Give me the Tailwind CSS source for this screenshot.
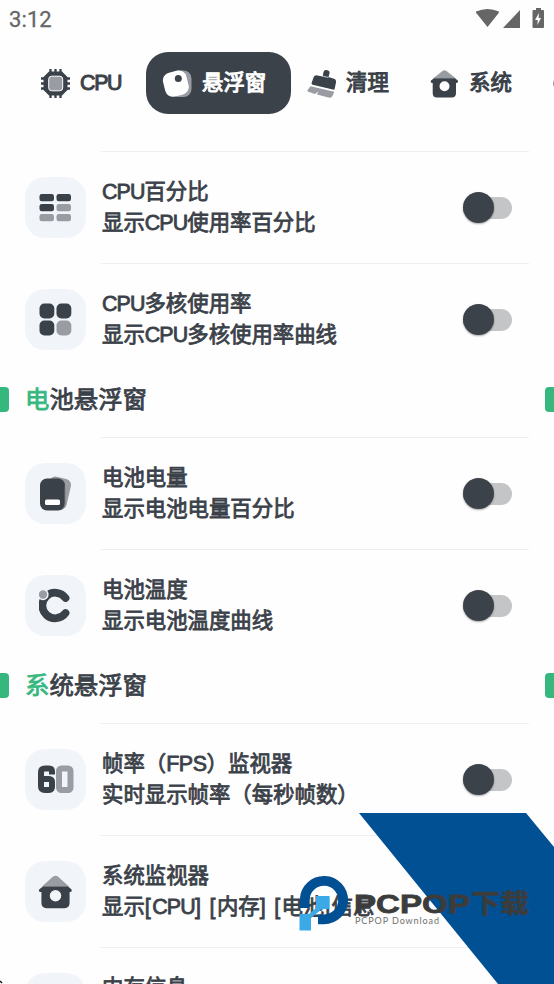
<!DOCTYPE html>
<html lang="zh-CN">
<head>
<meta charset="utf-8">
<title>悬浮窗</title>
<script src="https://cdn.jsdelivr.net/npm/@tailwindcss/browser@4"></script>
</head>
<body class="bg-[#fefefe]">
<main class="relative flex h-[984px] w-[554px] flex-col overflow-hidden bg-[#fefefe] font-['Liberation_Sans','Noto_Sans_CJK_SC',sans-serif] text-[21.4px] text-[#3b4149]">
  <!-- status bar -->
  <header class="flex h-[38px] shrink-0 items-center justify-between pl-[9px] pr-[9px] font-[Roboto,sans-serif] text-[22px] leading-[38px] text-[#666]">
    <span class="pt-[2px] tracking-[0.1px] [-webkit-text-stroke:0.3px_#666]">3:12</span>
    <svg class="h-[38px] w-[72px]" viewBox="0 0 72 38" fill="#666">
      <path d="M3 11.500Q14.500 6.500 26 11.500Q26 13 24.500 14.500L14.500 27L4.500 14.500Q2.500 13 3 11.500Z"/>
      <path d="M47 10V28H30Z"/>
      <path fill-rule="evenodd" d="M63 8H68V10H70Q71 10 71 11V27Q71 28 70 28H60.500Q59.500 28 59.500 27V11Q59.500 10 60.500 10H63ZM66 13L62 20H64.800L64.300 25L68 18H65.600Z"/>
    </svg>
  </header>

  <!-- tabs -->
  <nav class="flex h-[113px] shrink-0 items-start pt-[14px] [-webkit-text-stroke:1px_currentColor]">
    <div class="flex h-[62px] w-[146px] shrink-0 items-center pl-[40px]">
      <svg class="h-[31px] w-[31px]" viewBox="0 0 31 31">
        <path d="M10.500 1V30M15.500 1V30M20.500 1V30M1 10.500H30M1 15.500H30M1 20.500H30" stroke="#3b4149" stroke-width="2.300"/>
        <path d="M9 3.500H22L27.500 9V22L22 27.500H9L3.500 22V9Z" fill="#3b4149"/>
        <rect x="8.700" y="8.200" width="14" height="14.600" rx="3" fill="#999ca2" stroke="#fff" stroke-width="1"/>
      </svg>
      <span class="ml-[9px] tracking-[-1.300px]">CPU</span>
    </div>
    <div class="flex h-[62px] w-[145px] shrink-0 items-center rounded-[22px] bg-[#3b424a] pl-[16px] text-white">
      <svg class="h-[31px] w-[31px]" viewBox="0 0 31 31">
        <rect x="8" y="2.500" width="21.500" height="26.500" rx="8" fill="#999ca2"/>
        <rect x="1.800" y="3.300" width="24" height="24.700" rx="8" fill="#fff" transform="rotate(-14 13.800 15.600)"/>
        <circle cx="16.300" cy="10.400" r="3.500" fill="#3b424a"/>
      </svg>
      <span class="ml-[9px]">悬浮窗</span>
    </div>
    <div class="flex h-[62px] w-[123px] shrink-0 items-center pl-[15px]">
      <svg class="h-[31px] w-[31px]" viewBox="0 0 31 31">
        <path d="M17.500 4Q18.200 1.600 20.500 2.100L22 2.500Q24.100 3.200 23.600 5L22.500 9L28 10.700Q30.500 11.700 30 14.500L28.700 20.500Q28.400 22 26.800 21.600L6.600 16.800Q5.200 16.300 5.600 15L7.500 9.500Q8.600 6.700 11.400 7.400L16.600 8.400Z" fill="#3b4149"/>
        <path d="M16.200 8L22.400 9.500" stroke="#fff" stroke-width=".7"/>
        <path d="M4.500 18.200L28.300 23.700L26.600 27.700Q25.500 30.300 22.500 29.600L11 26.500L12.500 23.500L9 26L2.200 23.800Q.5 22.900 2 21.500Z" fill="#999ca2"/>
      </svg>
      <span class="ml-[9px]">清理</span>
    </div>
    <div class="flex h-[62px] w-[139px] shrink-0 items-center pl-[15px]">
      <svg class="h-[31px] w-[31px]" viewBox="0 0 31 31">
        <path d="M4 10.500L13.500 3Q15.500 1.500 17.500 3L27 10.500Z" fill="#999ca2"/>
        <path fill-rule="evenodd" d="M5 10.300H26L28.800 12.600Q29.800 14.500 27.800 15H27V25Q27 29.500 22.500 29.500H8Q3.700 29.500 3.700 25V15H2.800Q.9 14.500 2 12.600ZM15.500 13.300A5 5 0 1 0 15.500 23.300A5 5 0 1 0 15.500 13.300Z" fill="#3b4149"/>
      </svg>
      <span class="ml-[9px]">系统</span>
    </div>
    <i class="mt-[25px] h-[13px] w-[13px] shrink-0 rounded-full bg-[#999ca2]"></i>
  </nav>

  <!-- settings list -->
  <section class="shrink-0 leading-[31px] [-webkit-text-stroke:0.8px_currentColor]">
    <article class="flex h-[112px] items-center pl-[25px]">
      <div class="flex h-[61px] w-[61px] shrink-0 items-center justify-center rounded-[20px] bg-[#f1f5fa]">
        <svg class="h-[33px] w-[33px]" viewBox="0 0 33 33" fill="#3b4149">
          <rect x=".5" y="3" width="14.500" height="7.300" rx="2.300"/><rect x="17.500" y="3" width="14.500" height="7.300" rx="2.300"/><rect x=".5" y="13" width="14.500" height="7.300" rx="2.300"/>
          <g fill="#999ca2"><rect x="17.500" y="13" width="14.500" height="7.300" rx="2.300"/><rect x=".5" y="23" width="14.500" height="7.300" rx="2.300"/><rect x="17.500" y="23" width="14.500" height="7.300" rx="2.300"/></g>
        </svg>
      </div>
      <div class="ml-[15px] flex h-full w-[428px] items-center justify-between border-t border-[#efefef] pr-[17px]">
        <div class="pl-px whitespace-nowrap"><p><span class="tracking-[-0.900px]">CPU</span>百分比</p><p>显示<span class="tracking-[-0.900px]">CPU</span>使用率百分比</p></div>
        <div class="flex h-[22px] w-[49px] items-center rounded-full bg-[#c4c5c7]"><i class="h-[31px] w-[31px] shrink-0 rounded-full bg-[#3b424a] shadow-[0_1px_2px_rgba(0,0,0,0.35)]"></i></div>
      </div>
    </article>
    <article class="flex h-[112px] items-center pl-[25px]">
      <div class="flex h-[61px] w-[61px] shrink-0 items-center justify-center rounded-[20px] bg-[#f1f5fa]">
        <svg class="h-[33px] w-[33px]" viewBox="0 0 33 33" fill="#3b4149">
          <rect x=".5" y=".5" width="14.800" height="15" rx="4.800"/><rect x="17.500" y=".5" width="14.800" height="15" rx="4.800"/><rect x=".5" y="17.500" width="14.800" height="15" rx="4.800"/><rect x="17.500" y="17.500" width="14.800" height="15" rx="4.800" fill="#999ca2"/>
        </svg>
      </div>
      <div class="ml-[15px] flex h-full w-[428px] items-center justify-between border-t border-[#efefef] pr-[17px]">
        <div class="pl-px whitespace-nowrap"><p><span class="tracking-[-0.900px]">CPU</span>多核使用率</p><p>显示<span class="tracking-[-0.900px]">CPU</span>多核使用率曲线</p></div>
        <div class="flex h-[22px] w-[49px] items-center rounded-full bg-[#c4c5c7]"><i class="h-[31px] w-[31px] shrink-0 rounded-full bg-[#3b424a] shadow-[0_1px_2px_rgba(0,0,0,0.35)]"></i></div>
      </div>
    </article>

    <h2 class="flex h-[62px] items-start justify-between pt-[12px] text-[24.4px] leading-[25px]">
      <i class="h-[25px] w-[9px] rounded-r-[4px] bg-[#35b77e]"></i>
      <span class="ml-[16px] grow"><span class="text-[#35b77e]">电</span>池悬浮窗</span>
      <i class="h-[25px] w-[9px] rounded-l-[4px] bg-[#35b77e]"></i>
    </h2>

    <article class="flex h-[112px] items-center pl-[25px]">
      <div class="flex h-[61px] w-[61px] shrink-0 items-center justify-center rounded-[20px] bg-[#f1f5fa]">
        <svg class="h-[35px] w-[33px]" viewBox="0 0 33 35">
          <rect x="8" y="1.500" width="22" height="31" rx="6" fill="#999ca2" transform="rotate(13 19 17)"/>
          <rect x="1" y="2.500" width="25" height="32" rx="7" fill="#3b4149"/>
          <path d="M26 10V28Q26 32 22 34" fill="none" stroke="#7d8187" stroke-width=".8"/>
          <rect x="6" y="23.500" width="15" height="5.500" rx="1.500" fill="#fff"/>
        </svg>
      </div>
      <div class="ml-[15px] flex h-full w-[428px] items-center justify-between border-t border-[#efefef] pr-[17px]">
        <div class="pl-px whitespace-nowrap"><p>电池电量</p><p>显示电池电量百分比</p></div>
        <div class="flex h-[22px] w-[49px] items-center rounded-full bg-[#c4c5c7]"><i class="h-[31px] w-[31px] shrink-0 rounded-full bg-[#3b424a] shadow-[0_1px_2px_rgba(0,0,0,0.35)]"></i></div>
      </div>
    </article>
    <article class="flex h-[112px] items-center pl-[25px]">
      <div class="flex h-[61px] w-[61px] shrink-0 items-center justify-center rounded-[20px] bg-[#f1f5fa]">
        <svg class="h-[35px] w-[33px]" viewBox="0 0 33 35">
          <path d="M26.500 10A12.800 12.800 0 1 0 26.500 25" fill="none" stroke="#3b4149" stroke-width="7.800" stroke-linecap="round"/>
          <circle cx="4" cy="6.500" r="4.900" fill="#999ca2" stroke="#f1f5fa" stroke-width="1.500"/>
        </svg>
      </div>
      <div class="ml-[15px] flex h-full w-[428px] items-center justify-between border-t border-[#efefef] pr-[17px]">
        <div class="pl-px whitespace-nowrap"><p>电池温度</p><p>显示电池温度曲线</p></div>
        <div class="flex h-[22px] w-[49px] items-center rounded-full bg-[#c4c5c7]"><i class="h-[31px] w-[31px] shrink-0 rounded-full bg-[#3b424a] shadow-[0_1px_2px_rgba(0,0,0,0.35)]"></i></div>
      </div>
    </article>

    <h2 class="flex h-[62px] items-start justify-between pt-[12px] text-[24.4px] leading-[25px]">
      <i class="h-[25px] w-[9px] rounded-r-[4px] bg-[#35b77e]"></i>
      <span class="ml-[16px] grow"><span class="text-[#35b77e]">系</span>统悬浮窗</span>
      <i class="h-[25px] w-[9px] rounded-l-[4px] bg-[#35b77e]"></i>
    </h2>

    <article class="flex h-[112px] items-center pl-[25px]">
      <div class="flex h-[61px] w-[61px] shrink-0 items-center justify-center rounded-[20px] bg-[#f1f5fa]">
        <svg class="h-[29px] w-[37px]" viewBox="0 0 37 29" fill="none" stroke-width="6">
          <path d="M15 9.500V6.500Q15 3.500 12 3.500H8Q4 3.500 4 7V21.500Q4 25 8 25H12Q15 25 15 21.500V17.500Q15 14 12 14H5" stroke="#3b4149"/>
          <rect x="22" y="3.500" width="11.500" height="21.500" rx="2.500" stroke="#999ca2"/>
        </svg>
      </div>
      <div class="ml-[15px] flex h-full w-[428px] items-center justify-between border-t border-[#efefef] pr-[17px]">
        <div class="pl-px whitespace-nowrap"><p>帧率（<span class="tracking-[-0.400px]">FPS</span>）监视器</p><p>实时显示帧率（每秒帧数）</p></div>
        <div class="flex h-[22px] w-[49px] items-center rounded-full bg-[#c4c5c7]"><i class="h-[31px] w-[31px] shrink-0 rounded-full bg-[#3b424a] shadow-[0_1px_2px_rgba(0,0,0,0.35)]"></i></div>
      </div>
    </article>
    <article class="flex h-[112px] items-center pl-[25px]">
      <div class="flex h-[61px] w-[61px] shrink-0 items-center justify-center rounded-[20px] bg-[#f1f5fa]">
        <svg class="h-[37px] w-[37px]" viewBox="0 0 31 31">
          <path d="M4 11.500L13.500 3Q15.500 1.500 17.500 3L27 11.500Z" fill="#999ca2"/>
          <path fill-rule="evenodd" d="M5 11.300H26L28.800 13.600Q29.800 15.500 27.800 16H27.300V25Q27.300 29.500 23 29.500H8Q3.700 29.500 3.700 25V16H2.800Q.9 15.500 2 13.600ZM15.500 14.300A4.800 4.800 0 1 0 15.500 23.900A4.800 4.800 0 1 0 15.500 14.300Z" fill="#3b4149"/>
        </svg>
      </div>
      <div class="ml-[15px] flex h-full w-[428px] items-center justify-between border-t border-[#efefef] pr-[17px]">
        <div class="pl-px whitespace-nowrap"><p>系统监视器</p><p>显示<span class="tracking-[1.400px]">[</span><span class="tracking-[-0.800px]">CPU</span><span class="tracking-[1.400px]">] [</span>内存<span class="tracking-[1.300px]">] [</span>电池<span class="tracking-[1.300px]">]</span>信息</p></div>
      </div>
    </article>
    <article class="flex h-[112px] items-center pl-[25px]">
      <div class="h-[61px] w-[61px] shrink-0 rounded-[20px] bg-[#f1f5fa]"></div>
      <div class="ml-[15px] flex h-full w-[428px] items-start border-t border-[#efefef] pt-[25px]">
        <p class="pl-px whitespace-nowrap">内存信息</p>
      </div>
    </article>
  </section>

  <!-- watermark overlay -->
  <svg class="absolute bottom-0 left-0 h-[184px] w-[554px]" viewBox="0 800 554 184">
    <path d="M359 813H526L554 847V984H498Z" fill="#005093"/>
    <path d="M304.800 908V899A19.200 19.200 0 1 1 324 919.300H318" fill="none" stroke="#005093" stroke-width="9.800"/>
    <path d="M316 896H329.500V909H322L311 918V930.500H299.500V914H309L316 908Z" fill="#3ba9e6"/>
    <path d="M0 981L2 983" stroke="#111" stroke-width="1.500"/>
    <g fill="#3c3c3c" font-family="'Liberation Sans','Noto Sans CJK SC',sans-serif" font-weight="bold">
      <text x="354" y="913" font-size="26.500" textLength="116" lengthAdjust="spacingAndGlyphs" stroke="#3c3c3c" stroke-width=".8">PCPOP</text>
      <text x="471" y="912.500" font-size="26" textLength="58" lengthAdjust="spacingAndGlyphs" stroke="#3c3c3c" stroke-width=".5">下载</text>
      <text x="355" y="924" font-family="Lato,sans-serif" font-weight="normal" font-size="9" textLength="84" fill="#707070">PCPOP Download</text>
    </g>
  </svg>
</main>
</body>
</html>
